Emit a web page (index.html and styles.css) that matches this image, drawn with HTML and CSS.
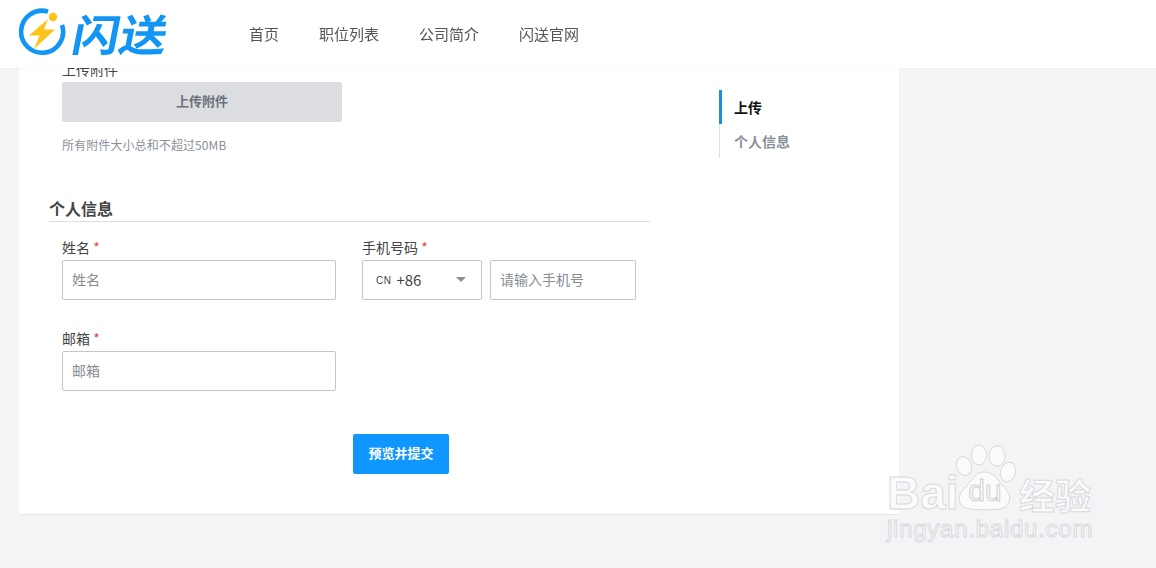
FILE: index.html
```html
<!DOCTYPE html>
<html lang="zh-CN">
<head>
    <meta charset="UTF-8">
    <title>闪送</title>
    <link rel="stylesheet" href="styles.css">
</head>
<body>
    <header class="topbar">
        <a class="logo">
            <svg class="logo-mark" width="48" height="48" viewBox="0 0 48 48">
                <path d="M30 3.6A21 21 0 1 0 44 17" fill="none" stroke="#1296f5" stroke-width="4.6"/>
                <path d="M30 11L11 27.5h10.5L16 41l21-19.5H26z" fill="#fcc419"/>
                <circle cx="35" cy="9" r="4.2" fill="#fcc419"/>
            </svg>
            <span class="logo-text">闪送</span>
        </a>
        <nav class="nav">
            <a>首页</a>
            <a>职位列表</a>
            <a>公司简介</a>
            <a>闪送官网</a>
        </nav>
    </header>

    <div class="card">
        <main class="form-col">
            <section class="upload">
                <div class="label">上传附件</div>
                <button class="upload-btn">上传附件</button>
                <p class="hint">所有附件大小总和不超过50MB</p>
            </section>

            <h2 class="section-title">个人信息</h2>
            <div class="fields">
                <div class="field">
                    <div class="label">姓名 <span class="req">*</span></div>
                    <input class="input" placeholder="姓名">
                </div>
                <div class="field">
                    <div class="label">手机号码 <span class="req">*</span></div>
                    <div class="phone">
                        <div class="select">
                            <span class="cc">CN</span>
                            <span class="code">+86</span>
                            <span class="caret"></span>
                        </div>
                        <input class="input" placeholder="请输入手机号">
                    </div>
                </div>
                <div class="field">
                    <div class="label">邮箱 <span class="req">*</span></div>
                    <input class="input" placeholder="邮箱">
                </div>
            </div>
            <div class="submit-row">
                <button class="submit">预览并提交</button>
            </div>
        </main>

        <aside class="side">
            <a class="side-item active">上传</a>
            <a class="side-item">个人信息</a>
        </aside>
    </div>

    <div class="watermark">
        <svg class="paw" width="66" height="68" viewBox="0 0 66 68">
            <g fill="#fbfbfc" stroke="#d9d9dc" stroke-width="1">
                <ellipse cx="10" cy="22" rx="7.5" ry="9.5" transform="rotate(-20 10 22)"/>
                <ellipse cx="25" cy="11" rx="7.5" ry="10"/>
                <ellipse cx="43" cy="12" rx="8" ry="10"/>
                <ellipse cx="54" cy="28" rx="7.5" ry="10" transform="rotate(15 54 28)"/>
                <path d="M30 28C20 28 18 38 10 45C2 52 4 64 16 65C24 66 38 66 46 65C58 63 58 50 50 43C44 38 42 28 30 28Z"/>
            </g>
            <text x="31" y="57" text-anchor="middle" class="paw-text">du</text>
        </svg>
        <span class="wm-bai">Bai</span>
        <span class="wm-cn">经验</span>
        <span class="wm-url">jingyan.baidu.com</span>
    </div>
</body>
</html>
```

FILE: styles.css
```css
body {
    margin: 0;
    height: 568px;
    overflow: hidden;
    background-color: #f3f4f6;
    color: #444;
    font-family: "Noto Sans CJK SC", "Noto Sans", sans-serif;
    font-size: 14px;
}
.topbar {
    position: fixed;
    top: 0;
    left: 0;
    right: 0;
    height: 68px;
    z-index: 10;
    display: flex;
    align-items: center;
    background-color: #fff;
    box-shadow: 0 1px 1px rgba(0, 0, 0, 0.02);
}
.logo {
    display: flex;
    align-items: center;
    width: 249px;
    padding: 0 0 4px 18px;
    box-sizing: border-box;
}
.logo-text {
    margin-left: 12px;
    color: #1296f5;
    font-size: 43px;
    font-weight: 700;
    line-height: 50px;
    letter-spacing: 0;
    transform: scaleX(1.1) skewX(-10deg);
}
.nav {
    display: flex;
    gap: 40px;
}
.nav a {
    color: #555;
    font-size: 15px;
    line-height: 18px;
}
.card {
    display: flex;
    width: 880px;
    height: 515px;
    margin-left: 19px;
    padding-top: 60px;
    box-sizing: border-box;
    background-color: #fff;
    border-bottom: 1px solid #e6e7ea;
}
.form-col {
    width: 631px;
    padding-left: 30px;
    box-sizing: border-box;
}
.upload {
    padding-left: 13px;
}
.label {
    height: 20px;
    line-height: 18px;
    color: #444;
}
.req {
    color: #e0473f;
}
.upload-btn {
    display: block;
    width: 280px;
    height: 40px;
    margin-top: 2px;
    padding: 0 0 3px;
    border: none;
    border-radius: 2px;
    background-color: #dcdde1;
    color: #6c717c;
    font-family: inherit;
    font-size: 13px;
    font-weight: 700;
}
.hint {
    margin: 14px 0 0;
    color: #8a8f97;
    font-size: 12px;
    line-height: 18px;
    letter-spacing: 0.1px;
}
.section-title {
    margin: 44px 0 0;
    height: 23px;
    line-height: 20px;
    color: #444;
    font-size: 16px;
    font-weight: 700;
    border-bottom: 1px solid #dcdde0;
}
.fields {
    display: grid;
    grid-template-columns: 274px 274px;
    column-gap: 26px;
    row-gap: 29px;
    padding: 16px 0 0 13px;
}
.field .label {
    margin-bottom: 2px;
}
.input {
    display: block;
    width: 100%;
    height: 40px;
    min-width: 0;
    padding: 0 9px 2px;
    box-sizing: border-box;
    border: 1px solid #c4c6cb;
    border-radius: 2px;
    background-color: #fff;
    font-family: inherit;
    font-size: 14px;
    outline: none;
}
.input::placeholder {
    color: #888c94;
    opacity: 1;
}
.phone {
    display: flex;
    gap: 8px;
}
.select {
    display: flex;
    flex: none;
    align-items: center;
    width: 120px;
    height: 40px;
    padding: 0 15px 2px 13px;
    box-sizing: border-box;
    border: 1px solid #c4c6cb;
    border-radius: 2px;
}
.cc {
    margin: 3px 5px 0 0;
    font-family: "Liberation Sans", sans-serif;
    font-size: 10px;
    letter-spacing: 0.5px;
}
.code {
    flex: 1;
    font-size: 15px;
}
.caret {
    width: 0;
    height: 0;
    border-left: 5px solid transparent;
    border-right: 5px solid transparent;
    border-top: 5px solid #8a8f97;
}
.submit-row {
    padding: 43px 0 0 304px;
}
.submit {
    display: block;
    width: 96px;
    height: 40px;
    padding: 0 0 3px;
    border: none;
    border-radius: 2px;
    background-color: #0f96ff;
    color: #fff;
    font-family: inherit;
    font-size: 13px;
    font-weight: 700;
}
.side {
    align-self: flex-start;
    display: flex;
    flex-direction: column;
    width: 140px;
    margin: 30px 0 0 69px;
    border-left: 1px solid #dcdde0;
}
.side-item {
    height: 34px;
    line-height: 34px;
    margin-left: -1px;
    padding-left: 12px;
    border-left: 3px solid transparent;
    box-sizing: border-box;
    color: #8a8f97;
    font-size: 14px;
    font-weight: 700;
}
.side-item.active {
    border-left-color: #1a8ee0;
    color: #111;
}
.watermark {
    position: absolute;
    left: 886px;
    top: 444px;
    width: 210px;
    height: 100px;
    color: #fbfbfc;
    font-family: "Liberation Sans", sans-serif;
    -webkit-text-stroke: 1px #d9d9dc;
}
.paw {
    position: absolute;
    left: 68px;
    top: 0;
}
.paw-text {
    fill: #fbfbfc;
    stroke: #cfcfd3;
    font-size: 30px;
}
.wm-bai {
    position: absolute;
    left: 1px;
    top: 24px;
    font-size: 46px;
    font-weight: 700;
    line-height: 50px;
}
.wm-cn {
    position: absolute;
    left: 133px;
    top: 28px;
    font-family: "Noto Sans CJK SC", sans-serif;
    font-size: 36px;
    font-weight: 700;
    line-height: 44px;
}
.wm-url {
    position: absolute;
    left: 1px;
    top: 70px;
    font-size: 24px;
    line-height: 30px;
    letter-spacing: 0.75px;
}
```
